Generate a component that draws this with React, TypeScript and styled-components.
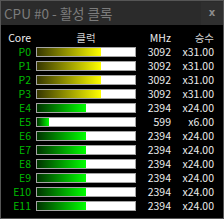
import React from 'react'
import styled, { createGlobalStyle } from 'styled-components'

const MAX_MHZ = 4740

const cores = [
  { name: 'P0', mhz: 3092, mult: 'x31.00', kind: 'p' },
  { name: 'P1', mhz: 3092, mult: 'x31.00', kind: 'p' },
  { name: 'P2', mhz: 3092, mult: 'x31.00', kind: 'p' },
  { name: 'P3', mhz: 3092, mult: 'x31.00', kind: 'p' },
  { name: 'E4', mhz: 2394, mult: 'x24.00', kind: 'e' },
  { name: 'E5', mhz: 599, mult: 'x6.00', kind: 'e' },
  { name: 'E6', mhz: 2394, mult: 'x24.00', kind: 'e' },
  { name: 'E7', mhz: 2394, mult: 'x24.00', kind: 'e' },
  { name: 'E8', mhz: 2394, mult: 'x24.00', kind: 'e' },
  { name: 'E9', mhz: 2394, mult: 'x24.00', kind: 'e' },
  { name: 'E10', mhz: 2394, mult: 'x24.00', kind: 'e' },
  { name: 'E11', mhz: 2394, mult: 'x24.00', kind: 'e' }
] as const

const GlobalStyle = createGlobalStyle`
  html, body {
    margin: 0;
    padding: 0;
    background: #000000;
  }
  body {
    font-family: "Noto Sans CJK KR", "Noto Sans", sans-serif;
  }
`

const Window = styled.div`
  width: 224px;
  height: 219px;
  box-sizing: border-box;
  border: 1px solid #565656;
  background: #000000;
  display: flex;
  flex-direction: column;
  overflow: hidden;
`

const TitleBar = styled.div`
  height: 24px;
  flex: none;
  background: #2b2b2b;
  display: flex;
  align-items: center;
  justify-content: space-between;
`

const Title = styled.div`
  padding-left: 3px;
  font-size: 13.5px;
  color: #7c7c7c;
  line-height: 24px;
  white-space: nowrap;
`

const CloseButton = styled.div`
  width: 22px;
  height: 23px;
  display: flex;
  align-items: center;
  justify-content: center;
  font-family: "DejaVu Sans", sans-serif;
  font-size: 10px;
  font-weight: bold;
  color: #8c8c8c;
  background: #2f2f2f;
  padding-bottom: 2px;
  box-sizing: border-box;
`

const Table = styled.div`
  padding-top: 6px;
  display: grid;
  grid-template-columns: 30px 105px 35px 43px;
  grid-auto-rows: 14px;
  align-items: center;
  font-size: 10.5px;
`

const Cell = styled.div<{ $muted?: boolean; $core?: boolean }>`
  text-align: right;
  color: ${({ $muted, $core }) => ($core ? '#00bb00' : $muted ? '#cfcfcf' : '#ececec')};
  white-space: nowrap;
  line-height: 14px;
`

const BarHead = styled(Cell)`
  text-align: center;
  padding-left: 5px;
`

const BarCell = styled.div`
  display: flex;
  justify-content: flex-end;
`

const Bar = styled.div`
  width: 100px;
  height: 10px;
  box-sizing: border-box;
  border: 1px solid #a4a4a4;
  background: #ffffff;
  display: flex;
`

const Fill = styled.div<{ $kind: 'p' | 'e' }>`
  height: 100%;
  background: ${({ $kind }) =>
    $kind === 'p'
      ? 'linear-gradient(to right, #363600, #ffff00)'
      : 'linear-gradient(to right, #003200, #00ff00)'};
`

export default function App() {
  return (
    <>
      <GlobalStyle />
      <Window>
        <TitleBar>
          <Title>CPU #0 - 활성 클록</Title>
          <CloseButton>x</CloseButton>
        </TitleBar>
        <Table>
          <Cell>Core</Cell>
          <BarHead $muted>클럭</BarHead>
          <Cell>MHz</Cell>
          <Cell $muted>승수</Cell>
          {cores.map(({ name, mhz, mult, kind }) => (
            <React.Fragment key={name}>
              <Cell $core>{name}</Cell>
              <BarCell>
                <Bar>
                  <Fill $kind={kind} style={{ width: Math.round((mhz / MAX_MHZ) * 98) }} />
                </Bar>
              </BarCell>
              <Cell>{mhz}</Cell>
              <Cell>{mult}</Cell>
            </React.Fragment>
          ))}
        </Table>
      </Window>
    </>
  )
}
